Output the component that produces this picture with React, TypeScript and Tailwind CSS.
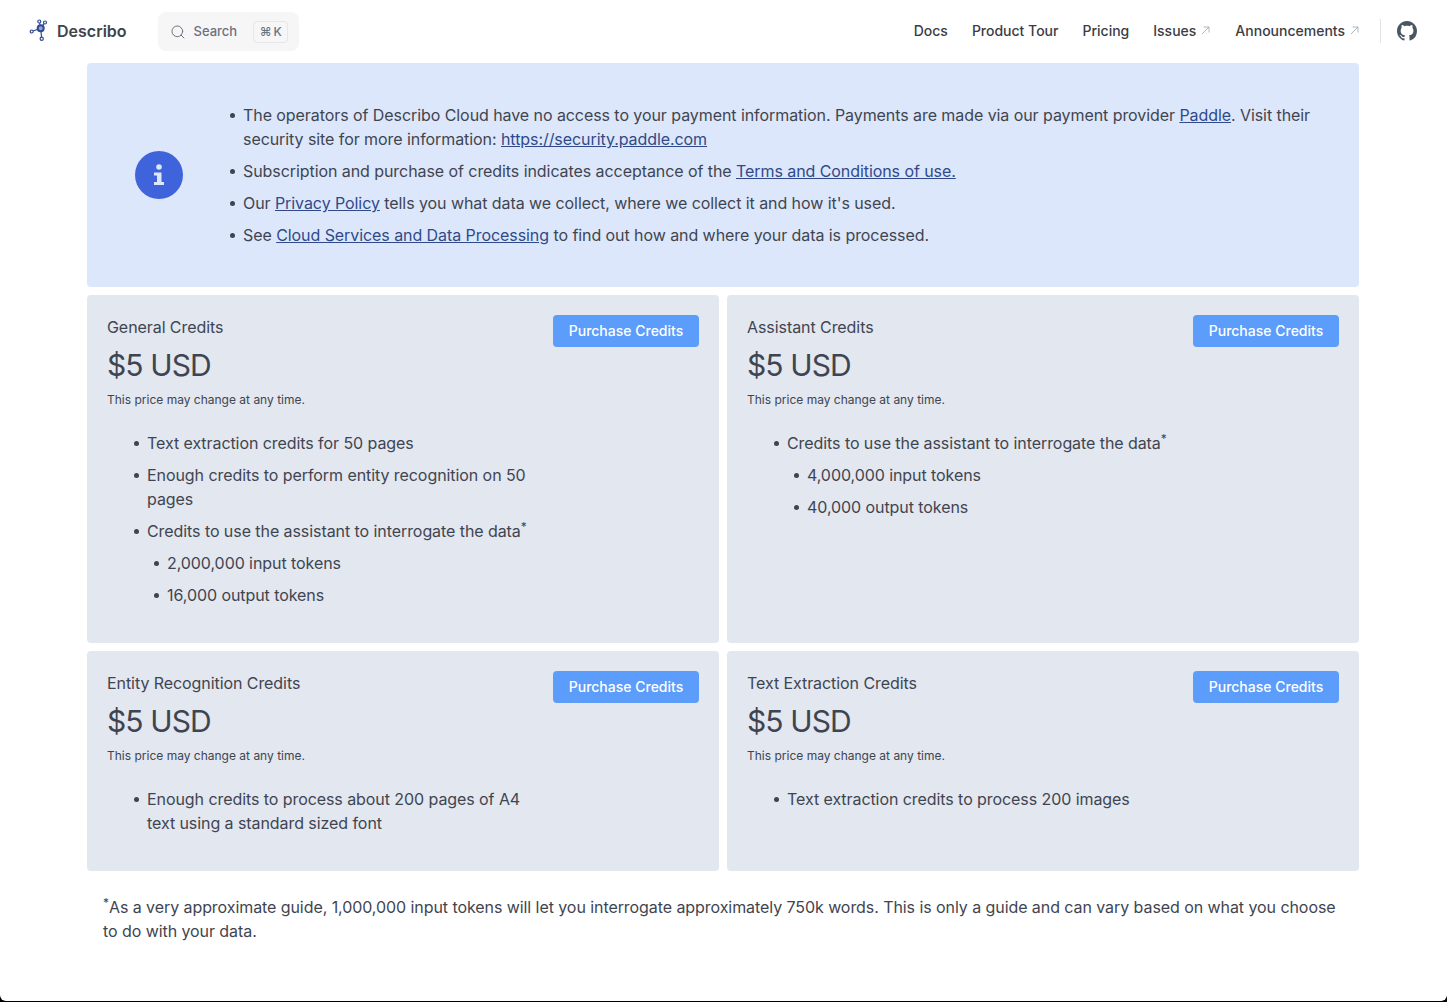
import { Search } from "lucide-react";
import type { ReactNode } from "react";

function ArrowOut() {
    return (
        <svg width="9" height="9" viewBox="0 0 9 9" fill="none" stroke="#9ca3af" strokeWidth="0.8" className="ml-[5px]">
            <path d="M1 8 L8 1 M2.5 1 H8 V6.5" />
        </svg>
    );
}

function Logo() {
    return (
        <svg width="20" height="24" viewBox="0 0 20 24" fill="none" stroke="#2f4a94" strokeWidth="1.2">
            <path d="M11.7 9.2 L10.3 2.5 M11.7 9.2 L16 3.5 M11.7 9.2 L2.7 12.5 M11.7 9.2 L12.7 19.8" />
            <circle cx="11.7" cy="9.2" r="3" fill="#8fa3d6" strokeWidth="2" />
            <circle cx="10.3" cy="2.5" r="1.5" fill="white" />
            <circle cx="16" cy="3.5" r="1.5" fill="white" />
            <circle cx="2.7" cy="12.5" r="1.5" fill="white" />
            <circle cx="12.7" cy="19.8" r="1.6" fill="white" />
        </svg>
    );
}

function GithubMark() {
    return (
        <svg width="20" height="20" viewBox="0 0 16 16" fill="#4b5563">
            <path d="M8 0C3.58 0 0 3.58 0 8c0 3.54 2.29 6.53 5.47 7.59.4.07.55-.17.55-.38 0-.19-.01-.82-.01-1.49-2.01.37-2.53-.49-2.69-.94-.09-.23-.48-.94-.82-1.13-.28-.15-.68-.52-.01-.53.63-.01 1.08.58 1.23.82.72 1.21 1.87.87 2.33.66.07-.52.28-.87.51-1.07-1.78-.2-3.64-.89-3.64-3.95 0-.87.31-1.59.82-2.15-.08-.2-.36-1.02.08-2.12 0 0 .67-.21 2.2.82.64-.18 1.32-.27 2-.27s1.36.09 2 .27c1.53-1.04 2.2-.82 2.2-.82.44 1.1.16 1.92.08 2.12.51.56.82 1.27.82 2.15 0 3.07-1.87 3.75-3.65 3.95.29.25.54.73.54 1.48 0 1.07-.01 1.93-.01 2.2 0 .21.15.46.55.38A8.01 8.01 0 0 0 16 8c0-4.42-3.58-8-8-8z" />
        </svg>
    );
}

function Header() {
    return (
        <header className="flex h-[63px] items-center justify-between pl-[29px] pr-[30px]">
            <div className="flex items-center">
                <div className="mb-[2px] flex items-center gap-[8px]">
                    <Logo />
                    <span className="text-[16px] font-semibold text-[#3f434a]">Describo</span>
                </div>
                <div className="ml-[31px] flex h-[39px] w-[141px] items-center rounded-lg bg-[#f6f6f7] pl-[12px] text-[#6b7280]">
                    <Search size={16} strokeWidth={1.5} />
                    <span className="ml-[8px] pt-[1px] text-[13px] font-medium">Search</span>
                    <span className="ml-[16px] flex h-[22px] w-[35px] items-center justify-center gap-[2px] rounded border border-[#e5e7eb] text-[12px] font-medium">
                        <span>⌘</span>
                        <span>K</span>
                    </span>
                </div>
            </div>
            <nav className="mb-[2px] flex items-center text-[14px] font-medium text-[#3c3c43]">
                <span>Docs</span>
                <span className="ml-[24px]">Product Tour</span>
                <span className="ml-[24px]">Pricing</span>
                <span className="ml-[24px] flex items-center">Issues<ArrowOut /></span>
                <span className="ml-[25px] flex items-center">Announcements<ArrowOut /></span>
                <div className="ml-[21px] h-[24px] w-px bg-[#e2e2e3]" />
                <div className="ml-[16px]"><GithubMark /></div>
            </nav>
        </header>
    );
}

function InfoLink({ children }: { children: ReactNode }) {
    return <a className="text-[#2f4a8a] underline">{children}</a>;
}

const bullet =
    "relative before:absolute before:left-[-13px] before:top-[10px] before:h-[5px] before:w-[5px] before:rounded-full before:bg-[#3f4550]";

function InfoBanner() {
    return (
        <div className="flex h-[224px] items-center rounded bg-[#dce7fb] pl-[48px] pr-[40px]">
            <div className="flex h-[48px] w-[48px] shrink-0 items-center justify-center rounded-full bg-[#3f63db]">
                <svg width="12" height="24" viewBox="0 0 12 24" fill="#dce7fb">
                    <circle cx="6" cy="4" r="2.8" />
                    <path d="M1 9.5h7.5v9.5H11v3H1v-3h3v-6.5H1z" />
                </svg>
            </div>
            <ul className="ml-[60px] space-y-2 text-[16px] leading-[24px] tracking-[-0.07px] text-[#3f4550]">
                <li className={bullet}>
                    The operators of Describo Cloud have no access to your payment information. Payments are made via
                    our payment provider <InfoLink>Paddle</InfoLink>. Visit their security site for more information:{" "}
                    <InfoLink>https://security.paddle.com</InfoLink>
                </li>
                <li className={bullet}>
                    Subscription and purchase of credits indicates acceptance of the{" "}
                    <InfoLink>Terms and Conditions of use.</InfoLink>
                </li>
                <li className={bullet}>
                    Our <InfoLink>Privacy Policy</InfoLink> tells you what data we collect, where we collect it and how
                    it's used.
                </li>
                <li className={bullet}>
                    See <InfoLink>Cloud Services and Data Processing</InfoLink> to find out how and where your data is
                    processed.
                </li>
            </ul>
        </div>
    );
}

function Star() {
    return <sup className="text-[12px]">*</sup>;
}

interface CreditCardProps {
    title: string;
    height: string;
    children: ReactNode;
}

function CreditCard({ title, height, children }: CreditCardProps) {
    return (
        <div className={`${height} rounded bg-[#e2e7f0] px-[20px] pt-[20px]`}>
            <div className="flex items-start justify-between">
                <div>
                    <div className="text-[16px] leading-[24px] tracking-[-0.07px] text-[#3f4550]">{title}</div>
                    <div className="mt-[8px] text-[30px] leading-[36px] tracking-[-0.9px] text-[#3f4550]">$5 USD</div>
                    <div className="mt-[9px] text-[12px] leading-[16px] text-[#3f4550]">
                        This price may change at any time.
                    </div>
                </div>
                <button className="h-[32px] w-[146px] rounded bg-[#5c9cfb] pb-[2px] text-[14px] font-medium text-white">
                    Purchase Credits
                </button>
            </div>
            <div className="mt-[23px] w-[440px] text-[16px] leading-[24px] tracking-[-0.07px] text-[#3f4550]">
                {children}
            </div>
        </div>
    );
}

function Points({ nested, children }: { nested?: boolean; children: ReactNode }) {
    return <ul className={`space-y-2 ${nested ? "mt-2 pl-[20px]" : "pl-[40px]"}`}>{children}</ul>;
}

export default function App() {
    return (
        <div className="h-[1002px] overflow-hidden bg-black font-['Inter',sans-serif]">
            <div className="h-[1001px] rounded-b-[6px] bg-white">
                <Header />
                <main className="ml-[87px] w-[1272px]">
                    <InfoBanner />
                    <div className="mt-[8px] grid grid-cols-2 gap-[8px]">
                        <CreditCard title="General Credits" height="h-[348px]">
                            <Points>
                                <li className={bullet}>Text extraction credits for 50 pages</li>
                                <li className={bullet}>Enough credits to perform entity recognition on 50 pages</li>
                                <li className={bullet}>
                                    Credits to use the assistant to interrogate the data<Star />
                                    <Points nested>
                                        <li className={bullet}>2,000,000 input tokens</li>
                                        <li className={bullet}>16,000 output tokens</li>
                                    </Points>
                                </li>
                            </Points>
                        </CreditCard>
                        <CreditCard title="Assistant Credits" height="h-[348px]">
                            <Points>
                                <li className={bullet}>
                                    Credits to use the assistant to interrogate the data<Star />
                                    <Points nested>
                                        <li className={bullet}>4,000,000 input tokens</li>
                                        <li className={bullet}>40,000 output tokens</li>
                                    </Points>
                                </li>
                            </Points>
                        </CreditCard>
                        <CreditCard title="Entity Recognition Credits" height="h-[220px]">
                            <Points>
                                <li className={bullet}>
                                    Enough credits to process about 200 pages of A4 text using a standard sized font
                                </li>
                            </Points>
                        </CreditCard>
                        <CreditCard title="Text Extraction Credits" height="h-[220px]">
                            <Points>
                                <li className={bullet}>Text extraction credits to process 200 images</li>
                            </Points>
                        </CreditCard>
                    </div>
                    <p className="mt-[24px] px-[16px] text-[16px] leading-[24px] tracking-[-0.07px] text-[#3f4550]">
                        <Star />As a very approximate guide, 1,000,000 input tokens will let you interrogate
                        approximately 750k words. This is only a guide and can vary based on what you choose to do with
                        your data.
                    </p>
                </main>
            </div>
        </div>
    );
}
